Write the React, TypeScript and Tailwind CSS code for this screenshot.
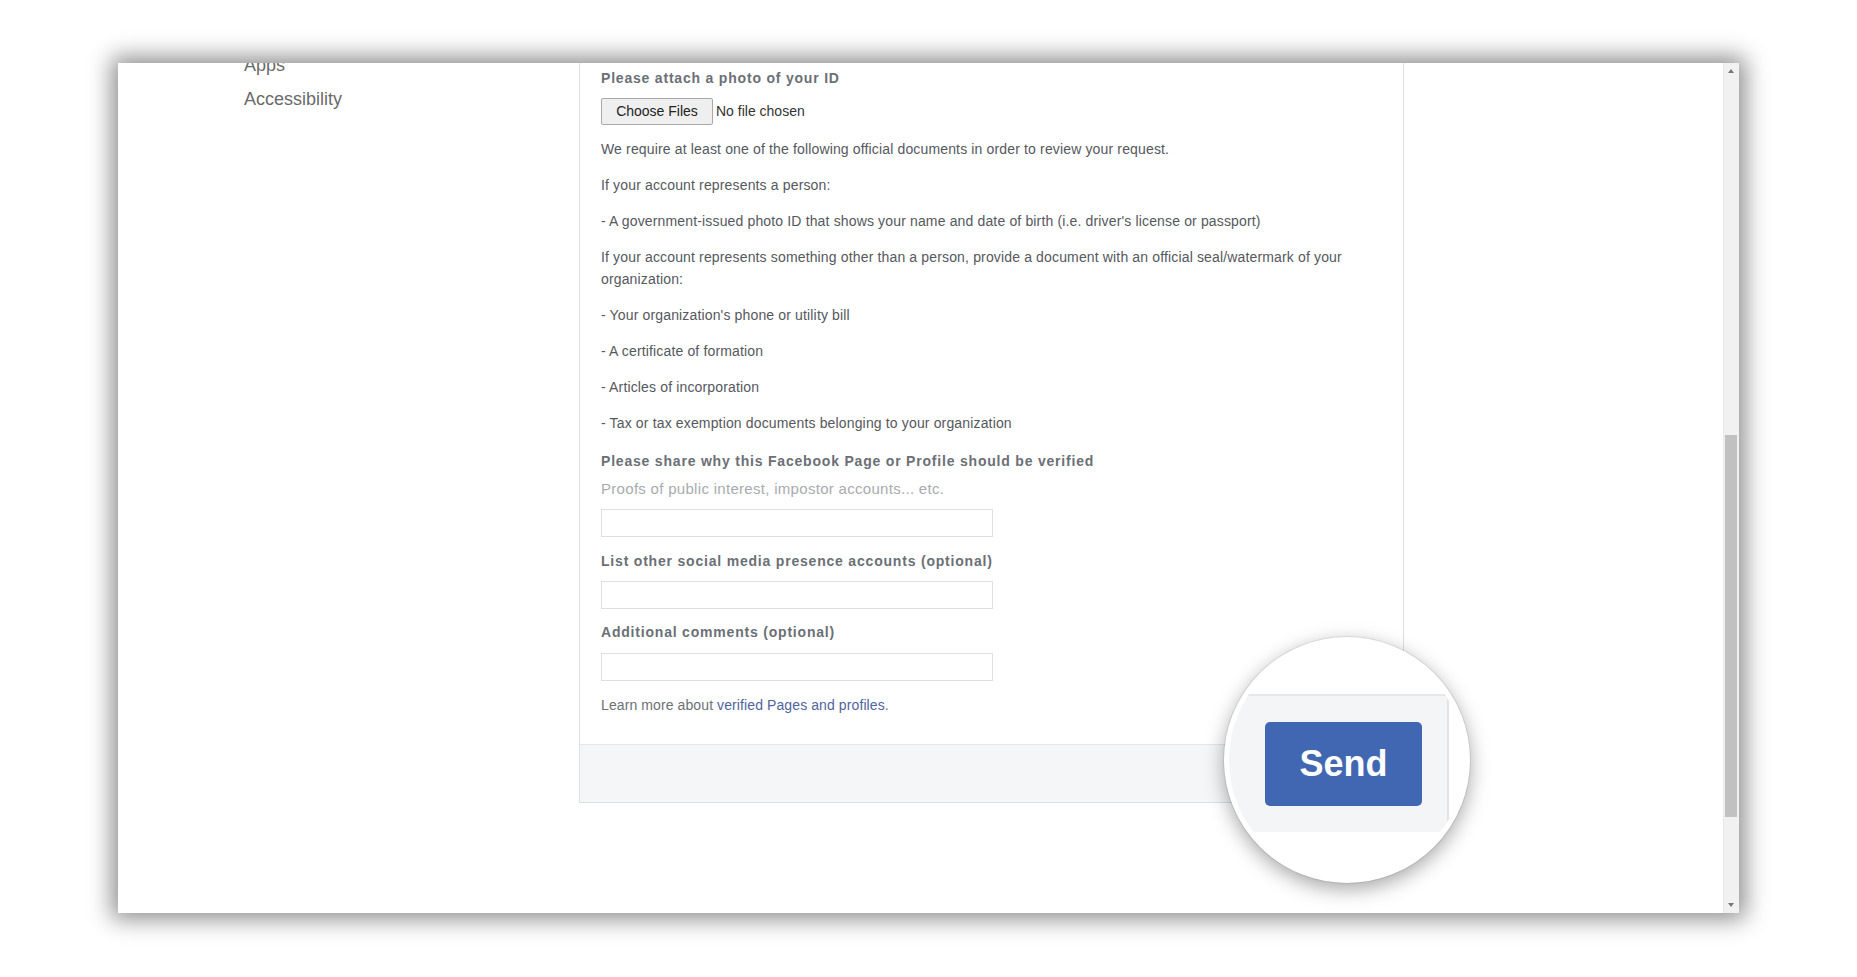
import React from 'react';

const docs = [
  'We require at least one of the following official documents in order to review your request.',
  'If your account represents a person:',
  "- A government-issued photo ID that shows your name and date of birth (i.e. driver's license or passport)",
  'If your account represents something other than a person, provide a document with an official seal/watermark of your organization:',
  "- Your organization's phone or utility bill",
  '- A certificate of formation',
  '- Articles of incorporation',
  '- Tax or tax exemption documents belonging to your organization',
];

function Label({ children, className = '' }: { children: React.ReactNode; className?: string }) {
  return (
    <div className={`text-[14px] leading-[18px] font-bold tracking-[0.8px] text-[#6b6f76] ${className}`}>
      {children}
    </div>
  );
}

function TextInput({ className = '' }: { className?: string }) {
  return <div className={`w-[392px] h-[28px] border border-[#dddfe2] bg-white ${className}`} />;
}

function Magnifier() {
  return (
    <div className="absolute left-[1106px] top-[574px] w-[246px] h-[246px] rounded-full border-[5px] border-white bg-white overflow-hidden shadow-[0_6px_20px_rgba(0,0,0,0.35),0_0_0_1px_rgba(0,0,0,0.08)]">
      <div className="absolute left-0 top-[52px] w-[218px] h-[138px] bg-[#f4f5f7] border-t-[2px] border-[#e6e7ea]" />
      <div className="absolute left-[218px] top-[52px] w-[2px] h-[138px] bg-[#e3e4e6]" />
      <div className="absolute left-[36px] top-[80px] w-[157px] h-[84px] rounded-[5px] bg-[#4267b2] flex items-center justify-center">
        <span className="text-white text-[36px] font-bold leading-none">Send</span>
      </div>
    </div>
  );
}

function Scrollbar() {
  return (
    <div className="w-[16px] shrink-0 flex flex-col bg-[#f1f1f1] border-l border-[#e9e9e9] pr-[2px]">
      <div className="h-[16px] flex items-center justify-center">
        <div className="w-0 h-0 border-l-[3px] border-r-[3px] border-b-[4px] border-l-transparent border-r-transparent border-b-[#777]" />
      </div>
      <div className="h-[356px]" />
      <div className="h-[382px] bg-[#c1c1c1] ml-[1px]" />
      <div className="flex-1" />
      <div className="h-[16px] flex items-center justify-center">
        <div className="w-0 h-0 border-l-[3px] border-r-[3px] border-t-[4px] border-l-transparent border-r-transparent border-t-[#777]" />
      </div>
    </div>
  );
}

export default function App() {
  return (
    <div className="min-h-screen bg-white pt-[63px] pl-[118px] font-['Liberation_Sans',Arial,sans-serif]">
      <div className="relative w-[1621px] h-[850px] bg-white flex overflow-hidden shadow-[0_0_22px_6px_rgba(0,0,0,0.45)]">
        <aside className="w-[461px] shrink-0 pl-[126px] -mt-[10px] text-[18px] leading-[24px] text-[#6a6a6a] flex flex-col gap-[10px]">
          <span>Apps</span>
          <span>Accessibility</span>
        </aside>

        <main className="w-[825px] shrink-0 self-start border-x border-b border-[#dddfe2] flex flex-col">
          <div className="pl-[21px] pr-[20px] pt-[6px] pb-[28px]">
            <Label>Please attach a photo of your ID</Label>
            <div className="mt-[11px] flex items-center text-[14px]">
              <div className="w-[112px] h-[27px] border border-[#a9a9a9] rounded-[2px] bg-[#efefef] flex items-center justify-center text-[#222]">
                Choose Files
              </div>
              <span className="ml-[3px] text-[#333]">No file chosen</span>
            </div>
            <div className="mt-[13px] text-[14px] leading-[22px] tracking-[0.15px] text-[#55585d] flex flex-col gap-[14px]">
              {docs.map((d) => (
                <p key={d}>{d}</p>
              ))}
            </div>
            <Label className="mt-[18px]">Please share why this Facebook Page or Profile should be verified</Label>
            <div className="mt-[10px] text-[15px] leading-[18px] tracking-[0.3px] text-[#a8abaf]">
              Proofs of public interest, impostor accounts... etc.
            </div>
            <TextInput className="mt-[11px]" />
            <Label className="mt-[15px]">List other social media presence accounts (optional)</Label>
            <TextInput className="mt-[11px]" />
            <Label className="mt-[14px]">Additional comments (optional)</Label>
            <TextInput className="mt-[12px]" />
            <p className="mt-[13px] text-[14px] leading-[22px] tracking-[0.1px] text-[#6d7075]">
              Learn more about <span className="text-[#4f64a0]">verified Pages and profiles</span>.
            </p>
          </div>
          <div className="h-[58px] bg-[#f5f6f7] border-t border-[#e5e6e9]" />
        </main>

        <div className="flex-1" />
        <Scrollbar />
        <Magnifier />
      </div>
    </div>
  );
}
